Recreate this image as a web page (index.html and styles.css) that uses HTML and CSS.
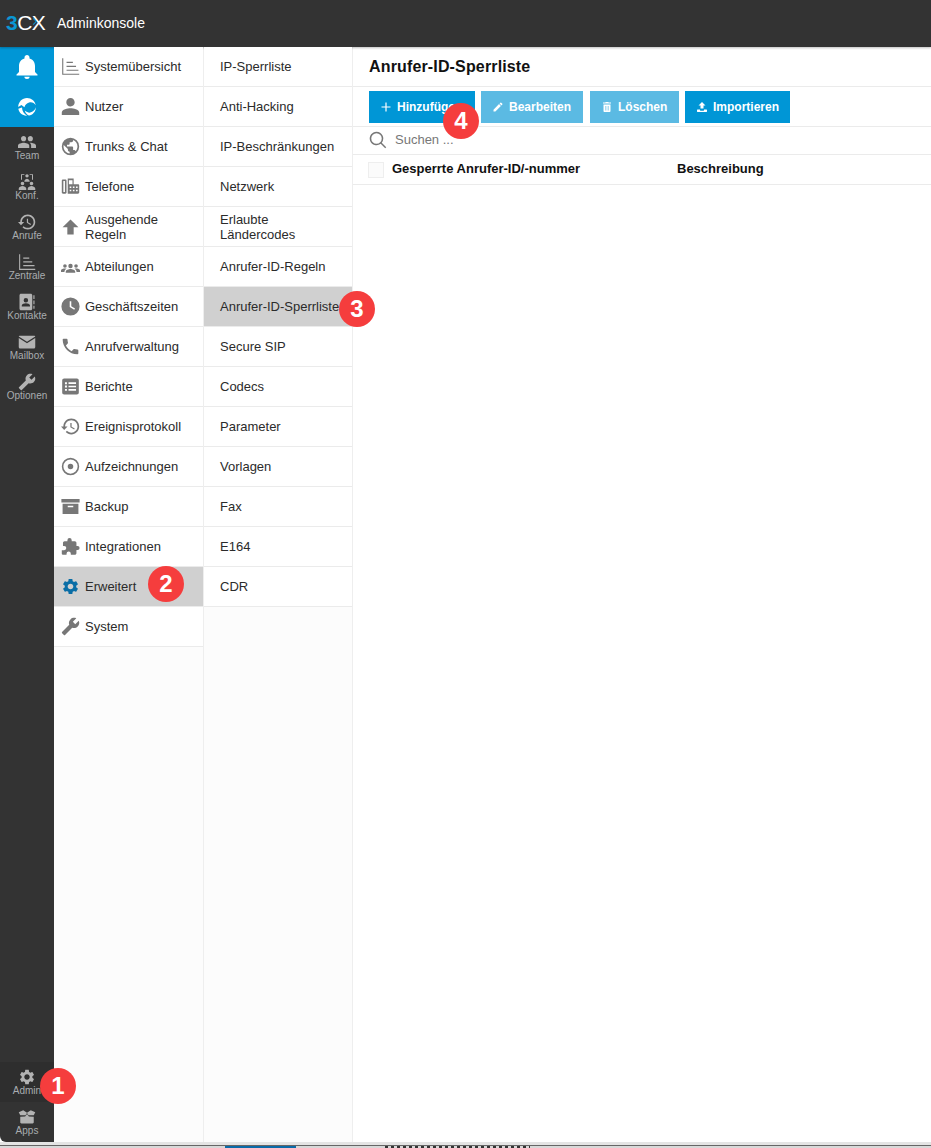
FILE: index.html
```html
<!DOCTYPE html>
<html lang="de">
<head>
<meta charset="utf-8">
<title>3CX Adminkonsole</title>
<link rel="stylesheet" href="styles.css">
</head>
<body>
<svg class="defs" width="0" height="0" aria-hidden="true">
  <symbol id="i-bell" viewBox="0 0 24 24"><path d="M12 24c1.500 0 2.600-1 2.600-2.300H9.400C9.400 23 10.500 24 12 24zM20 17v-6c0-3.700-2-6.800-5.500-7.600V2.500C14.500 1.100 13.400 0 12 0S9.500 1.100 9.500 2.500v.9C6 4.200 4 7.300 4 11v6l-2.500 2.500v.9h21v-.9L20 17z"/></symbol>
  <symbol id="i-swirl" viewBox="0 0 24 24"><path d="M1.500 12C1.500 6 6.300 1.300 12 1.300c5.300 0 9.600 3.600 10.500 8.700-1.800-3-5-4.200-8-3.300-2.800.8-4.800 2.900-5.600 5.600L5.300 9.700zM1.600 14.200 6 12.500c.1 4 2.300 7.600 6 9.900C6.800 22.800 2.500 19.300 1.600 14.200zM22.700 12.400c0 5-4 9.600-8.400 9.900-2.500-1.200-4.300-3.100-5-6 3.600 3 6.500 3 8.800 1.500 2-1.200 3.800-3 4.600-5.400z"/></symbol>
  <symbol id="i-people" viewBox="0 0 24 24"><path d="M16.500 11c1.900 0 3.400-1.500 3.400-3.500S18.400 4 16.500 4s-3.500 1.500-3.500 3.500 1.600 3.500 3.500 3.500zm-9 0c1.900 0 3.400-1.500 3.400-3.500S9.400 4 7.500 4 4 5.500 4 7.500 5.600 11 7.500 11zm0 2C5 13 0 14.300 0 16.800V20h15v-3.200C15 14.300 10 13 7.500 13zm9 0c-.3 0-.7 0-1 .1 1.200.9 2 2.100 2 3.700V20H24v-3.200c0-2.500-5-3.800-7.500-3.800z"/></symbol>
  <symbol id="i-dept" viewBox="0 0 24 24"><path d="M12 8.500a2.800 2.800 0 1 1 0 5.600 2.800 2.800 0 0 1 0-5.600zM5 9a2.300 2.300 0 1 1 0 4.600A2.300 2.300 0 0 1 5 9zM19 9a2.300 2.300 0 1 1 0 4.600A2.300 2.300 0 0 1 19 9zM6 20v-1.500c0-2.300 4-3.500 6-3.500s6 1.200 6 3.500V20zM0 19v-2c0-1.700 3-2.500 5-2.500.7 0 1.400.1 2 .3-1.500.8-2.600 2-2.600 3.600V19zM24 19v-2c0-1.700-3-2.500-5-2.500-.7 0-1.400.1-2 .3 1.500.8 2.600 2 2.600 3.600V19z"/></symbol>
  <symbol id="i-conf" viewBox="0 0 24 24"><path d="M4 9V1.500h4.500v1.300H5.300V9zM20 9V1.500h-4.500v1.300h3.200V9zM12 1.500a2.300 2.300 0 1 1 0 4.600 2.300 2.300 0 0 1 0-4.600zM8.500 11c0-2 2.300-3.300 3.500-3.300s3.500 1.300 3.500 3.300v.7h-7zM6 11.500a2.400 2.400 0 1 1 0 4.800 2.400 2.400 0 0 1 0-4.800zM1 22.500v-1.700c0-2.300 3.300-3.500 5-3.500s5 1.200 5 3.500v1.700zM18 11.500a2.400 2.400 0 1 1 0 4.800 2.400 2.400 0 0 1 0-4.800zM13 22.500v-1.700c0-2.300 3.300-3.500 5-3.500s5 1.200 5 3.500v1.700z"/></symbol>
  <symbol id="i-history" viewBox="0 0 24 24"><path d="M13 2c-5.500 0-10 4.500-10 10H0l4 4.300L8.300 12H5.200c0-4.300 3.500-7.800 7.800-7.800s7.800 3.500 7.800 7.800-3.500 7.800-7.800 7.800c-2.100 0-4.100-.9-5.500-2.300L6 19c1.800 1.900 4.300 3 7 3 5.500 0 10-4.500 10-10S18.500 2 13 2zm-1.200 5.500V13l4.800 2.900.8-1.300-4-2.400V7.500z"/></symbol>
  <symbol id="i-chart" viewBox="0 0 24 24"><path d="M1.500 1.500h1.400v19.600H23v1.400H1.500zM7 6h8v1.500H7zM7 11h12v1.500H7zM7 16h15v1.500H7z"/></symbol>
  <symbol id="i-contact" viewBox="0 0 24 24"><path fill-rule="evenodd" d="M4 1h13c1.100 0 2 .9 2 2v18c0 1.100-.9 2-2 2H4c-1.100 0-2-.9-2-2V3c0-1.100.9-2 2-2zm6.500 5.500a3 3 0 1 0 0 6 3 3 0 0 0 0-6zM5 18h11v-1.500c0-1.800-3.500-2.800-5.500-2.800S5 14.700 5 16.500zM20.500 3H22v5h-1.500zM20.500 10H22v5h-1.500zM20.500 17H22v4h-1.500z"/></symbol>
  <symbol id="i-mail" viewBox="0 0 24 24"><path d="M2.500 3.500h19c.9 0 1.500.4 1.500 1L12 11.500 1 4.500c0-.6.600-1 1.500-1zM1 6.500 12 13.500l11-7V18.500c0 1.100-.8 2-1.800 2H2.800c-1 0-1.800-.9-1.800-2z"/></symbol>
  <symbol id="i-wrench" viewBox="0 0 24 24"><g transform="matrix(-1 0 0 1 24 0)"><path d="M22.700 19l-9.100-9.100c.9-2.300.4-5-1.500-6.900-2-2-5-2.400-7.400-1.300L9 6 6 9 1.600 4.700C.4 7.100.9 10.100 2.900 12.100c1.900 1.900 4.600 2.400 6.900 1.500l9.100 9.100c.4.400 1 .4 1.400 0l2.300-2.300c.5-.4.5-1.100.1-1.400z"/></g></symbol>
  <symbol id="i-gear" viewBox="0 0 24 24"><path d="M19.140 12.940c.04-.3.06-.61.06-.94 0-.32-.02-.64-.07-.94l2.030-1.580c.18-.14.23-.41.12-.61l-1.920-3.320c-.12-.22-.37-.29-.59-.22l-2.390.96c-.5-.38-1.030-.7-1.620-.94l-.36-2.540c-.04-.24-.24-.41-.48-.41h-3.840c-.24 0-.43.17-.47.41l-.36 2.540c-.59.24-1.130.57-1.620.94l-2.390-.96c-.22-.08-.47 0-.59.22L2.740 8.870c-.12.21-.08.47.12.61l2.030 1.580c-.05.3-.09.63-.09.94s.02.64.07.94l-2.030 1.580c-.18.14-.23.41-.12.61l1.920 3.320c.12.22.37.29.59.22l2.390-.96c.5.38 1.030.7 1.620.94l.36 2.540c.05.24.24.41.48.41h3.840c.24 0 .44-.17.47-.41l.36-2.540c.59-.24 1.130-.56 1.620-.94l2.390.96c.22.08.47 0 .59-.22l1.920-3.320c.12-.22.07-.47-.12-.61l-2.010-1.580zM12 15.600c-1.980 0-3.600-1.620-3.600-3.600s1.620-3.600 3.600-3.600 3.600 1.620 3.600 3.600-1.620 3.600-3.600 3.600z"/></symbol>
  <symbol id="i-apps" viewBox="0 0 24 24"><path d="M3 9.500 1 5.500 7 3l5 3.200L17 3l6 2.500-2 4-7 .2-2-3-2 3zM3 11.500l6.500-.2 2.500-3.200 2.500 3.200 6.500.2V19c0 .8-.6 1.500-1.500 1.500h-15C3.600 20.500 3 19.800 3 19z"/></symbol>
  <symbol id="i-person" viewBox="0 0 24 24"><path d="M12 12c3 0 5.300-2.400 5.300-5.300S15 1.300 12 1.300 6.700 3.700 6.700 6.700 9 12 12 12zm0 2.300c-3.500 0-11 1.700-11 5.300v3h22v-3c0-3.600-7.500-5.300-11-5.300z"/></symbol>
  <symbol id="i-globe" viewBox="0 0 24 24"><path d="M12 1a11 11 0 1 0 0 22 11 11 0 0 0 0-22zm-1.100 19.800C6.600 20.300 3.200 16.500 3.200 12c0-.7.100-1.300.2-2l5.300 5.300v1.100c0 1.200 1 2.200 2.200 2.200zm7.600-2.800c-.3-.9-1.100-1.500-2.100-1.500h-1.100v-3.300c0-.6-.5-1.100-1.100-1.100H7.600V9.900h2.200c.6 0 1.100-.5 1.100-1.100V6.600h2.200c1.200 0 2.200-1 2.200-2.200v-.5c3.200 1.300 5.500 4.500 5.500 8.100 0 2.300-.9 4.400-2.300 6z"/></symbol>
  <symbol id="i-desk" viewBox="0 0 24 24"><path fill-rule="evenodd" d="M2.500 3h3c.8 0 1.500.7 1.500 1.500v15c0 .8-.7 1.500-1.500 1.500h-3C1.700 21 1 20.300 1 19.500v-15C1 3.700 1.700 3 2.500 3zM3 5v14h2V5zM8.500 2H16v7h5.500c.8 0 1.500.7 1.500 1.500v9c0 .8-.7 1.500-1.500 1.500H8.500zM10 4v5h4.500V4zM11 12v2h2v-2zm4 0v2h2v-2zm4 0v2h2v-2zm-8 4v2h2v-2zm4 0v2h2v-2zm4 0v2h2v-2z"/></symbol>
  <symbol id="i-up" viewBox="0 0 24 24"><path d="M12 3 22 13h-6v9H8v-9H2z"/></symbol>
  <symbol id="i-clock" viewBox="0 0 24 24"><path fill-rule="evenodd" d="M12 .5a11.500 11.500 0 1 0 0 23 11.500 11.500 0 0 0 0-23zM11 5.500h2v6.100l4.700 2.800-1 1.700-5.700-3.400z"/></symbol>
  <symbol id="i-phone" viewBox="0 0 24 24"><path d="M6.200 10.700c1.600 3.100 4 5.600 7.200 7.200l2.400-2.400c.3-.3.7-.4 1.100-.3 1.200.4 2.500.6 3.900.6.600 0 1.100.5 1.100 1.100v3.900c0 .6-.5 1.100-1.100 1.100C10.500 21.900 2.100 13.500 2.100 3.200c0-.6.500-1.100 1.100-1.100h3.900c.6 0 1.100.5 1.100 1.100 0 1.400.2 2.700.6 3.900.1.400 0 .8-.3 1.100z"/></symbol>
  <symbol id="i-list" viewBox="0 0 24 24"><path fill-rule="evenodd" d="M4 2h16c1.600 0 2.500 1 2.500 2.500v15c0 1.500-.9 2.500-2.500 2.500H4c-1.600 0-2.500-1-2.500-2.500v-15C1.500 3 2.400 2 4 2zM5 6.500V9h2.500V6.500zm4.500.2V8.800H19V6.700zM5 10.800v2.500h2.500v-2.500zm4.500.2V13H19v-2zM5 15v2.500h2.500V15zm4.500.2v2.100H19v-2.100z"/></symbol>
  <symbol id="i-rec" viewBox="0 0 24 24"><path fill-rule="evenodd" d="M12 1a11 11 0 1 0 0 22 11 11 0 0 0 0-22zm0 2a9 9 0 1 1 0 18 9 9 0 0 1 0-18zm0 5.500a3.500 3.500 0 1 0 0 7 3.500 3.500 0 0 0 0-7z"/></symbol>
  <symbol id="i-box" viewBox="0 0 24 24"><path fill-rule="evenodd" d="M.5 2.500h23v4.500H.5zM2 8.500h20V21.500H2zM8.500 11v2h7v-2z"/></symbol>
  <symbol id="i-puzzle" viewBox="0 0 24 24"><path d="M21 11.500h-1.500V7.500c0-1.100-.9-2-2-2h-4V4a2.700 2.700 0 0 0-5.400 0v1.500H4.500c-1.100 0-2 .9-2 2v3.800H4a2.700 2.700 0 0 1 0 5.400H1V21c0 .6.900 1.500 2 1.500h4v-1.500a2.700 2.700 0 0 1 5.400 0v1.500h5.100c1.100 0 2-.9 2-2v-4H21a2.500 2.500 0 0 0 0-5z"/></symbol>
  <symbol id="i-pencil" viewBox="0 0 24 24"><path d="M3 17.250V21h3.750L17.810 9.940l-3.750-3.750L3 17.250zM20.710 7.040c.39-.39.39-1.020 0-1.410l-2.340-2.340c-.39-.39-1.020-.39-1.410 0l-1.830 1.830 3.750 3.750 1.830-1.830z"/></symbol>
  <symbol id="i-trash" viewBox="0 0 24 24"><path fill-rule="evenodd" d="M5 7h14v13c0 1.100-.9 2-2 2H7c-1.100 0-2-.9-2-2zm4 3v9h1.500v-9zm4.500 0v9H15v-9zM20 3v2H4V3h4.500l1-1h5l1 1z"/></symbol>
  <symbol id="i-upload" viewBox="0 0 24 24"><path d="M12 2l7 7h-4v6H9V9H5zM3 17h5v1.500c0 .6.400 1 1 1h6c.6 0 1-.4 1-1V17h5c.6 0 1 .4 1 1v3c0 .6-.4 1-1 1H3c-.6 0-1-.4-1-1v-3c0-.6.400-1 1-1z"/></symbol>
  <symbol id="i-plus" viewBox="0 0 24 24"><path d="M10.800 3h2.400v7.800H21v2.400h-7.800V21h-2.400v-7.800H3v-2.400h7.800z"/></symbol>
  <symbol id="i-search" viewBox="0 0 24 24"><path fill-rule="evenodd" d="M10 1a9 9 0 0 1 7 14.600l6 6-1.400 1.400-6-6A9 9 0 1 1 10 1zm0 2a7 7 0 1 0 0 14 7 7 0 0 0 0-14z"/></symbol>
</svg>

<div class="window">
  <header class="topbar">
    <span class="logo"><span class="logo-3">3</span><span class="logo-cx">CX</span><i class="logo-mark"></i></span>
    <span class="app-title">Adminkonsole</span>
  </header>

  <div class="workspace">
    <nav class="rail">
      <a class="rail-blue"><svg class="rail-bell"><use href="#i-bell"/></svg></a>
      <a class="rail-blue"><svg class="rail-swirl"><use href="#i-swirl"/></svg></a>
      <a class="rail-item"><svg><use href="#i-people"/></svg><span>Team</span></a>
      <a class="rail-item"><svg><use href="#i-conf"/></svg><span>Konf.</span></a>
      <a class="rail-item"><svg><use href="#i-history"/></svg><span>Anrufe</span></a>
      <a class="rail-item"><svg><use href="#i-chart"/></svg><span>Zentrale</span></a>
      <a class="rail-item"><svg><use href="#i-contact"/></svg><span>Kontakte</span></a>
      <a class="rail-item"><svg><use href="#i-mail"/></svg><span>Mailbox</span></a>
      <a class="rail-item"><svg><use href="#i-wrench"/></svg><span>Optionen</span></a>
      <div class="rail-spacer"></div>
      <a class="rail-item rail-admin"><svg><use href="#i-gear"/></svg><span>Admin</span><b class="badge badge-1">1</b></a>
      <a class="rail-item"><svg><use href="#i-apps"/></svg><span>Apps</span></a>
    </nav>

    <nav class="menu">
      <a class="row"><svg class="row-icon"><use href="#i-chart"/></svg><span>Systemübersicht</span></a>
      <a class="row"><svg class="row-icon"><use href="#i-person"/></svg><span>Nutzer</span></a>
      <a class="row"><svg class="row-icon"><use href="#i-globe"/></svg><span>Trunks &amp; Chat</span></a>
      <a class="row"><svg class="row-icon"><use href="#i-desk"/></svg><span>Telefone</span></a>
      <a class="row"><svg class="row-icon"><use href="#i-up"/></svg><span>Ausgehende Regeln</span></a>
      <a class="row"><svg class="row-icon"><use href="#i-dept"/></svg><span>Abteilungen</span></a>
      <a class="row"><svg class="row-icon"><use href="#i-clock"/></svg><span>Geschäftszeiten</span></a>
      <a class="row"><svg class="row-icon"><use href="#i-phone"/></svg><span>Anrufverwaltung</span></a>
      <a class="row"><svg class="row-icon"><use href="#i-list"/></svg><span>Berichte</span></a>
      <a class="row"><svg class="row-icon"><use href="#i-history"/></svg><span>Ereignisprotokoll</span></a>
      <a class="row"><svg class="row-icon"><use href="#i-rec"/></svg><span>Aufzeichnungen</span></a>
      <a class="row"><svg class="row-icon"><use href="#i-box"/></svg><span>Backup</span></a>
      <a class="row"><svg class="row-icon"><use href="#i-puzzle"/></svg><span>Integrationen</span></a>
      <a class="row row-active"><svg class="row-icon"><use href="#i-gear"/></svg><span>Erweitert</span><b class="badge badge-2">2</b></a>
      <a class="row"><svg class="row-icon"><use href="#i-wrench"/></svg><span>System</span></a>
    </nav>

    <nav class="submenu">
      <a class="row">IP-Sperrliste</a>
      <a class="row">Anti-Hacking</a>
      <a class="row">IP-Beschränkungen</a>
      <a class="row">Netzwerk</a>
      <a class="row">Erlaubte Ländercodes</a>
      <a class="row">Anrufer-ID-Regeln</a>
      <a class="row row-active">Anrufer-ID-Sperrliste<b class="badge badge-3">3</b></a>
      <a class="row">Secure SIP</a>
      <a class="row">Codecs</a>
      <a class="row">Parameter</a>
      <a class="row">Vorlagen</a>
      <a class="row">Fax</a>
      <a class="row">E164</a>
      <a class="row">CDR</a>
    </nav>

    <main class="content">
      <h1 class="page-title">Anrufer-ID-Sperrliste</h1>
      <div class="toolbar">
        <button class="btn btn-add"><svg><use href="#i-plus"/></svg>Hinzufügen<b class="badge badge-4">4</b></button>
        <button class="btn btn-muted btn-edit"><svg><use href="#i-pencil"/></svg>Bearbeiten</button>
        <button class="btn btn-muted btn-del"><svg><use href="#i-trash"/></svg>Löschen</button>
        <button class="btn btn-import"><svg><use href="#i-upload"/></svg>Importieren</button>
      </div>
      <div class="search">
        <svg><use href="#i-search"/></svg>
        <span>Suchen ...</span>
      </div>
      <div class="table-head">
        <span class="check"></span>
        <span class="col-a">Gesperrte Anrufer-ID/-nummer</span>
        <span class="col-b">Beschreibung</span>
      </div>
    </main>
  </div>
</div>

<div class="behind">
  <i class="behind-a"></i>
  <i class="behind-b"></i>
  <i class="behind-c"></i>
</div>
</body>
</html>
```
FILE: styles.css
```css
* { box-sizing: border-box; }
html, body { margin: 0; height: 100%; }
body {
  height: 1148px;
  overflow: hidden;
  display: flex;
  flex-direction: column;
  font-family: "Liberation Sans", Arial, sans-serif;
  font-size: 13px;
  color: #222;
  background: #fff;
}
.defs { position: absolute; }
.window { height: 1145px; flex: none; display: flex; flex-direction: column; border-bottom: 3px solid #e4e4e4; }

.topbar {
  height: 47px;
  flex: none;
  background: #333;
  display: flex;
  align-items: center;
  padding: 0 0 2px 6px;
  box-shadow: 0 1px 2px rgba(0,0,0,.25);
  position: relative;
}
.logo { position: relative; width: 51px; font-size: 21px; line-height: 1; letter-spacing: -.5px; }
.logo-3 { color: #0a96d4; font-weight: 700; }
.logo-cx { color: #fff; }
.logo-mark {
  position: absolute;
  left: 25px;
  top: 7px;
  width: 5px;
  height: 5px;
  border-top: 1px solid #0a96d4;
  border-right: 1px solid #0a96d4;
  transform: rotate(45deg);
}
.app-title { color: #fff; font-size: 14px; }

.workspace { flex: 1; display: flex; min-height: 0; }

.rail {
  width: 54px;
  flex: none;
  background: #333;
  display: flex;
  flex-direction: column;
  border-bottom-left-radius: 6px;
}
.rail-blue {
  height: 40px;
  background: #0096d6;
  display: flex;
  align-items: center;
  justify-content: center;
}
.rail-bell { width: 24px; height: 24px; fill: #fff; }
.rail-swirl { width: 20px; height: 20px; fill: #fff; }
.rail-item {
  height: 40px;
  position: relative;
  display: flex;
  flex-direction: column;
  align-items: center;
  padding-top: 6px;
  color: #a9adb0;
  font-size: 10px;
  line-height: 11px;
}
.rail-item svg { width: 18px; height: 18px; fill: #b3b3b3; flex: none; margin-bottom: -1px; }
.rail-spacer { flex: 1; }
.rail-admin { background: #2e2e2e; }

.menu, .submenu {
  width: 150px;
  flex: none;
  background: #fcfcfc;
  border-right: 1px solid #eee;
}
.submenu { width: 149px; }
.row {
  height: 40px;
  display: flex;
  align-items: center;
  position: relative;
  background: #fff;
  border-bottom: 1px solid #ebebeb;
  line-height: 15px;
  color: #2b2b2b;
}
.menu .row { padding-left: 31px; padding-right: 20px; }
.submenu .row { padding-left: 16px; padding-right: 10px; }
.row-icon {
  position: absolute;
  left: 7px;
  top: 10px;
  width: 19px;
  height: 19px;
  fill: #777;
}
.row-active { background: #d0d0d0; }
.row-active .row-icon { fill: #0a6ea6; }

.badge {
  position: absolute;
  width: 36px;
  height: 36px;
  border-radius: 50%;
  background: #f53d3d;
  color: #fff;
  font-size: 24px;
  font-weight: 700;
  line-height: 36px;
  text-align: center;
}
.badge-1 { left: 40px; top: 6px; }
.badge-2 { left: 94px; top: -1px; }
.badge-3 { left: 135px; top: 4px; }
.badge-4 { left: 74px; top: 12px; }

.content { flex: 1; min-width: 0; background: #fff; }
.page-title {
  margin: 0;
  height: 40px;
  padding-left: 16px;
  font-size: 16px;
  letter-spacing: .15px;
  line-height: 39px;
  font-weight: 700;
  color: #111;
  border-bottom: 1px solid #ebebeb;
}
.toolbar {
  height: 40px;
  display: flex;
  align-items: flex-start;
  padding: 4px 0 0 16px;
  border-bottom: 1px solid #ebebeb;
}
.btn {
  position: relative;
  height: 32px;
  border: 0;
  padding: 0;
  display: flex;
  align-items: center;
  color: #fff;
  font: 700 12px "Liberation Sans", Arial, sans-serif;
  background: #0096d6;
  white-space: nowrap;
}
.btn svg { width: 12px; height: 12px; fill: #fff; flex: none; margin-right: 5px; }
.btn-muted { background: #5bbae3; }
.btn-add { width: 106px; padding-left: 11px; }
.btn-edit { width: 102px; margin-left: 6px; padding-left: 11px; }
.btn-del { width: 89px; margin-left: 7px; padding-left: 11px; }
.btn-import { width: 105px; margin-left: 6px; padding-left: 11px; }

.search {
  height: 28px;
  display: flex;
  align-items: center;
  padding: 0 0 2px 16px;
  color: #777;
  font-size: 13px;
  border-bottom: 1px solid #ebebeb;
}
.search svg { width: 18px; height: 18px; fill: #777; margin-right: 8px; }

.table-head {
  height: 30px;
  display: flex;
  align-items: center;
  padding: 0 0 2px 15px;
  font-weight: 700;
  color: #111;
  border-bottom: 1px solid #ebebeb;
}
.check { width: 16px; height: 16px; border: 1px solid #eee; background: #fbfbfb; flex: none; margin: 2px 8px 0 0; }
.col-a { width: 285px; }

.behind {
  height: 3px;
  flex: none;
  display: flex;
  background: #d8d8d8;
  border-top: 1px solid #666;
}
.behind-a { width: 225px; }
.behind-b { width: 71px; background: #0a6aa8; }
.behind-c {
  width: 145px;
  margin-left: 89px;
  background: repeating-linear-gradient(90deg, #333 0 3px, transparent 3px 6px);
}
```
